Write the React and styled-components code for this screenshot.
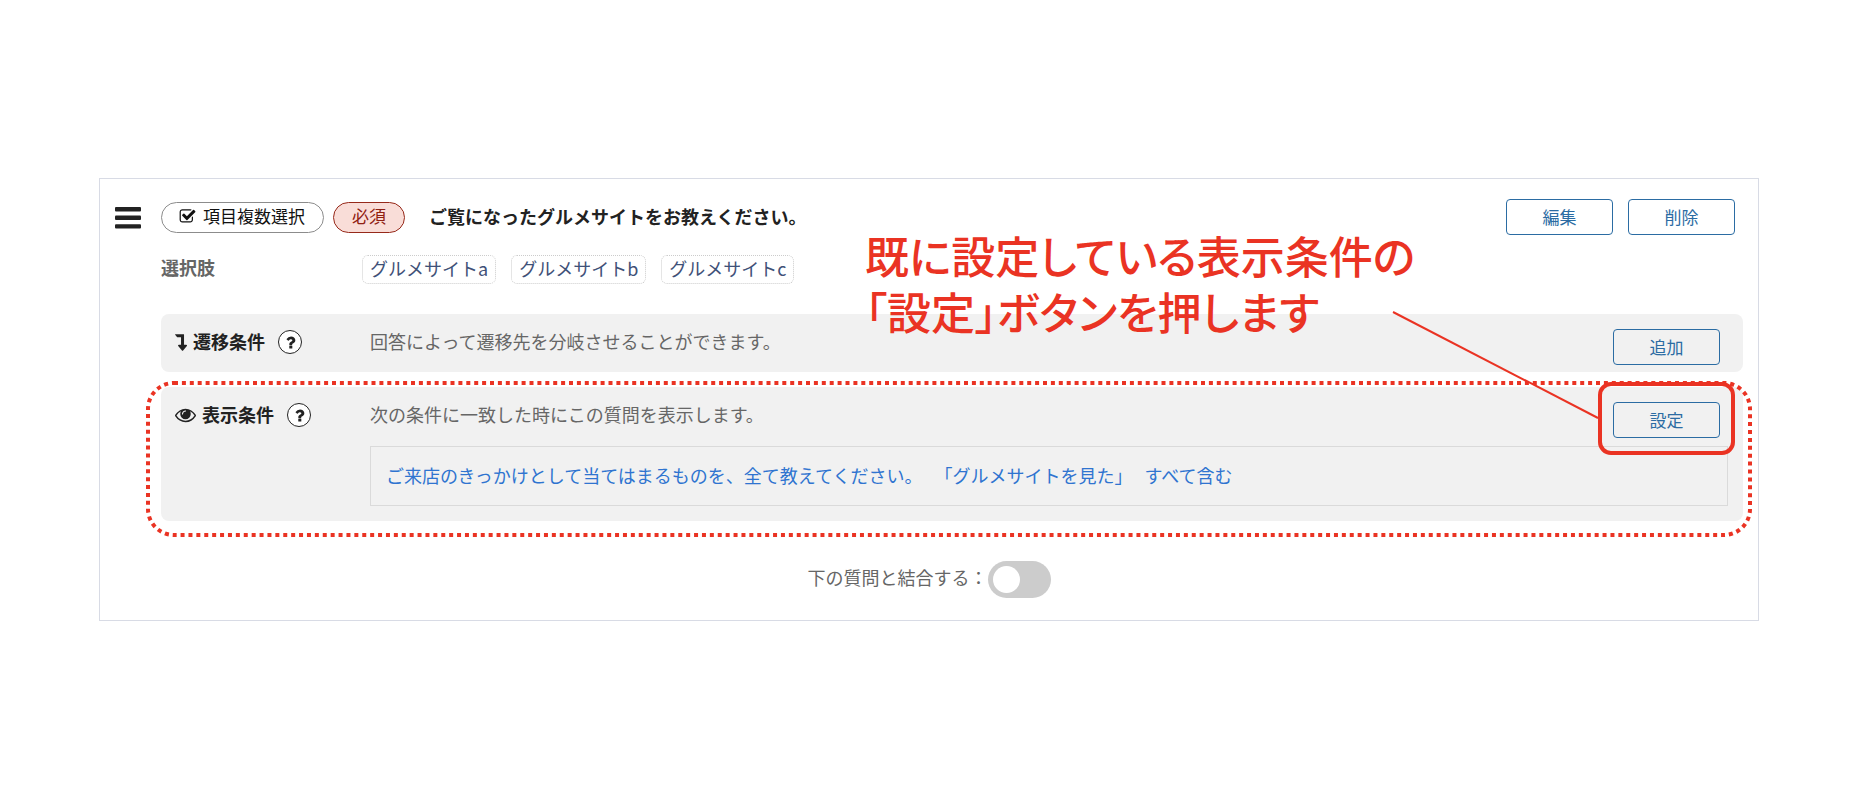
import styled, { createGlobalStyle } from "styled-components";

const GlobalStyle = createGlobalStyle`
  * {
    box-sizing: border-box;
  }
  body {
    margin: 0;
    background-color: #ffffff;
    color: #222222;
    font-family: "Noto Sans CJK JP", sans-serif;
    font-size: 18px;
    line-height: 24px;
  }
  button, input {
    font-family: inherit;
    margin: 0;
  }
`;

const Page = styled.main`
  padding: 178px 97px 40px 99px;
`;
const Card = styled.section`
  position: relative;
  display: flex;
  align-items: flex-start;
  padding: 20px 15px 22px;
  border: 1px solid #d8dbe5;
`;
const Handle = styled.button`
  display: flex;
  align-items: center;
  width: 46px;
  height: 38px;
  flex-shrink: 0;
  padding: 0;
  border: 0;
  background: none;
  color: #222222;
  cursor: grab;
`;
const Body = styled.div`
  flex: 1;
  min-width: 0;
`;
const Header = styled.header`
  display: flex;
  align-items: center;
  height: 36px;
`;
const Pill = styled.span`
  display: flex;
  align-items: center;
  gap: 7px;
  height: 31px;
  margin-right: 9px;
  padding: 0 18px 2px 17px;
  border: 1px solid #8c8c8c;
  border-radius: 16px;
  color: #111111;
  font-size: 17px;
  white-space: nowrap;
  &.required {
    padding: 0 18px 2px;
    border-color: #96291a;
    background-color: #f9ddd8;
    color: #8f2012;
  }
`;
const Title = styled.h2`
  margin: 0 0 0 15px;
  padding-bottom: 2px;
  font-size: 18px;
  font-weight: 700;
`;
const Actions = styled.div`
  display: flex;
  gap: 15px;
  margin-left: auto;
  margin-right: 8px;
`;
const OutlineButton = styled.button`
  width: 107px;
  height: 36px;
  padding: 0;
  border: 1px solid #2b6ca3;
  border-radius: 4px;
  background-color: ${(props) => (props.$plain ? "transparent" : "#ffffff")};
  color: #2b6ca3;
  font-size: 17px;
  line-height: 24px;
  cursor: pointer;
`;
const Choices = styled.div`
  display: flex;
  margin: 20px 0 30px;
`;
const ChoicesLabel = styled.div`
  width: 201px;
  color: #666666;
  font-weight: 700;
`;
const ChoiceList = styled.ul`
  display: flex;
  gap: 15px;
  margin: 0;
  padding: 0;
  list-style: none;
`;
const Choice = styled.li`
  height: 29px;
  padding: 0 7px;
  border: 1px dotted #cccccc;
  border-radius: 6px;
  color: #3f5178;
`;
const Panel = styled.div`
  position: relative;
  display: grid;
  grid-template-columns: 195px 1fr auto;
  align-items: start;
  row-gap: 8px;
  margin-bottom: 15px;
  padding: 15px 15px ${(props) => (props.$tall ? "15px" : "7px")} 14px;
  border-radius: 8px;
  background-color: #f1f1f1;
`;
const PanelLabel = styled.div`
  display: flex;
  align-items: center;
  height: 26px;
  gap: 6px;
`;
const PanelName = styled.h3`
  margin: 0;
  padding-bottom: 2px;
  font-size: 18px;
  font-weight: 700;
`;
const Help = styled.button`
  display: flex;
  align-items: center;
  justify-content: center;
  width: 24px;
  height: 24px;
  margin-left: 7px;
  padding: 0;
  border: 1px solid #222222;
  border-radius: 50%;
  background-color: #ffffff;
  color: #222222;
`;
const Description = styled.p`
  justify-self: start;
  margin: 0;
  color: #666666;
`;
const PanelAction = styled.div`
  position: relative;
  height: 36px;
  margin-right: 8px;
`;
const Condition = styled.a`
  grid-column: 2 / 4;
  display: flex;
  align-items: center;
  gap: 12px;
  height: 60px;
  padding: 0 15px 2px;
  border: 1px solid #dadada;
  color: #2f74d0;
  text-decoration: none;
`;
const Merge = styled.label`
  display: flex;
  align-items: center;
  width: fit-content;
  margin: 40px auto 0;
  /* centres on the card, not on the body beside the handle */
  padding-right: 46px;
  color: #666666;
`;
const MergeText = styled.span`
  padding-bottom: 6px;
`;
const Toggle = styled.input`
  appearance: none;
  width: 63px;
  height: 37px;
  padding: 5px;
  border-radius: 19px;
  background-color: #cccccc;
  cursor: pointer;
  &::before {
    content: "";
    display: block;
    width: 27px;
    height: 27px;
    border-radius: 50%;
    background-color: #ffffff;
  }
  &:checked {
    background-color: #2b6ca3;
  }
  &:checked::before {
    margin-left: auto;
  }
`;

/* red guide marks drawn over the form */
const Note = styled.p`
  position: absolute;
  top: 48px;
  left: 765px;
  margin: 0;
  color: #ea3323;
  font-size: 44px;
  font-weight: 500;
  line-height: 56px;
  font-feature-settings: "palt";
  white-space: nowrap;
  pointer-events: none;
`;
const DottedFrame = styled.svg`
  position: absolute;
  top: -6px;
  left: -15px;
  width: calc(100% + 24px);
  height: calc(100% + 22px);
  pointer-events: none;
  rect {
    width: calc(100% - 4px);
    height: calc(100% - 4px);
  }
`;
const ButtonFrame = styled.div`
  position: absolute;
  top: -20px;
  right: -15px;
  bottom: -17px;
  left: -15px;
  border: 4px solid #ea3323;
  border-radius: 13px;
  pointer-events: none;
`;
const Pointer = styled.svg`
  position: absolute;
  top: -92px;
  right: 121px;
  pointer-events: none;
`;

const BarsIcon = () => (
  <svg width="26" height="22" viewBox="0 0 26 22" fill="currentColor" aria-hidden="true">
    <rect width="26" height="4.4" rx="1" />
    <rect y="8.6" width="26" height="4.4" rx="1" />
    <rect y="17.2" width="26" height="4.4" rx="1" />
  </svg>
);
const CheckIcon = () => (
  <svg width="17" height="17" viewBox="0 0 1792 1792" fill="currentColor" aria-hidden="true">
    <path d="M1472 930v318q0 119-84.500 203.500t-203.500 84.500h-832q-119 0-203.500-84.500t-84.500-203.500v-832q0-119 84.500-203.500t203.500-84.500h832q63 0 117 25 15 7 18 23 3 17-9 29l-49 49q-10 10-23 10-3 0-9-2-23-6-45-6h-832q-66 0-113 47t-47 113v832q0 66 47 113t113 47h832q66 0 113-47t47-113v-254q0-13 9-22l64-64q10-10 23-10 6 0 12 3 20 8 20 29zm231-489l-814 814q-24 24-57 24t-57-24l-430-430q-24-24-24-57t24-57l110-110q24-24 57-24t57 24l263 263 647-647q24-24 57-24t57 24l110 110q24 24 24 57t-24 57z" />
  </svg>
);
const BranchIcon = () => (
  <svg width="12" height="21" viewBox="384 -64 1024 1792" fill="currentColor" aria-hidden="true">
    <path d="M418 128h704q13 0 22.500 9.500t9.500 23.500v863h192q40 0 58 37 17 37-9 68l-320 384q-18 22-49 22t-49-22l-320-384q-26-31-9-68 18-37 58-37h192v-640h-320q-14 0-25-11l-160-192q-13-14-4-34 9-19 29-19z" />
  </svg>
);
const EyeIcon = () => (
  <svg width="21" height="21" viewBox="0 64 1792 1792" fill="currentColor" aria-hidden="true">
    <path d="M1664 960q-152-236-381-353 61 104 61 225 0 185-131.500 316.500t-316.500 131.500-316.500-131.500-131.500-316.500q0-121 61-225-229 117-381 353 133 205 333.500 326.500t434.500 121.500 434.500-121.500 333.500-326.500zm-720-384q0-20-14-34t-34-14q-125 0-214.500 89.500t-89.500 214.500q0 20 14 34t34 14 34-14 14-34q0-86 61-147t147-61q20 0 34-14t14-34zm848 384q0 34-20 69-140 230-376.500 368.500t-499.500 138.500-499.500-139-376.500-368q-20-35-20-69t20-69q140-229 376.500-368t499.500-139 499.500 139 376.500 368q20 35 20 69z" />
  </svg>
);
const QuestionIcon = () => (
  <svg width="17" height="17" viewBox="0 0 1792 1792" fill="currentColor" aria-hidden="true">
    <path d="M1088 1256v240q0 16-12 28t-28 12h-240q-16 0-28-12t-12-28v-240q0-16 12-28t28-12h240q16 0 28 12t12 28zm316-600q0 54-15.500 101t-35 76.500-55 59.500-57.500 43.500-61 35.500q-41 23-68.500 65t-27.500 67q0 17-12 32.500t-28 15.500h-240q-15 0-25.500-18.500t-10.500-37.500v-45q0-83 65-156.500t143-108.500q59-27 84-56t25-76q0-42-46.500-74t-107.500-32q-65 0-108 29-35 25-107 115-13 16-31 16-12 0-25-8l-164-125q-13-10-15.500-25t5.500-28q160-266 464-266 80 0 161 31t146 83 106 127.500 41 158.500z" />
  </svg>
);

const choices = ["グルメサイトa", "グルメサイトb", "グルメサイトc"];

export default function App() {
  return (
    <Page>
      <GlobalStyle />
      <Card>
        <Handle type="button" aria-label="並べ替え">
          <BarsIcon />
        </Handle>
        <Body>
          <Header>
            <Pill>
              <CheckIcon />
              項目複数選択
            </Pill>
            <Pill className="required">必須</Pill>
            <Title>ご覧になったグルメサイトをお教えください。</Title>
            <Actions>
              <OutlineButton type="button">編集</OutlineButton>
              <OutlineButton type="button">削除</OutlineButton>
            </Actions>
          </Header>
          <Choices>
            <ChoicesLabel>選択肢</ChoicesLabel>
            <ChoiceList>
              {choices.map((choice) => (
                <Choice key={choice}>{choice}</Choice>
              ))}
            </ChoiceList>
          </Choices>
          <Panel>
            <PanelLabel>
              <BranchIcon />
              <PanelName>遷移条件</PanelName>
              <Help type="button" aria-label="遷移条件のヘルプ">
                <QuestionIcon />
              </Help>
            </PanelLabel>
            <Description>回答によって遷移先を分岐させることができます。</Description>
            <PanelAction>
              <OutlineButton type="button" $plain>追加</OutlineButton>
            </PanelAction>
          </Panel>
          <Panel $tall>
            <PanelLabel>
              <EyeIcon />
              <PanelName>表示条件</PanelName>
              <Help type="button" aria-label="表示条件のヘルプ">
                <QuestionIcon />
              </Help>
            </PanelLabel>
            <Description>次の条件に一致した時にこの質問を表示します。</Description>
            <PanelAction>
              <OutlineButton type="button" $plain>設定</OutlineButton>
              <ButtonFrame />
              <Pointer width="208" height="110" viewBox="0 0 208 110" aria-hidden="true">
                <path d="M2 2L207 108" stroke="#ea3323" strokeWidth="2" />
              </Pointer>
            </PanelAction>
            <Condition href="#condition">
              <span>ご来店のきっかけとして当てはまるものを、全て教えてください。</span>
              <span>「グルメサイトを見た」</span>
              <span>すべて含む</span>
            </Condition>
            <DottedFrame aria-hidden="true">
              <rect x="2" y="2" rx="26" fill="none" stroke="#ea3323" strokeWidth="4" strokeDasharray="4 3.9" />
            </DottedFrame>
          </Panel>
          <Merge>
            <MergeText>下の質問と結合する：</MergeText>
            <Toggle type="checkbox" />
          </Merge>
        </Body>
        <Note>
          既に設定している表示条件の
          <br />
          「設定」ボタンを押します
        </Note>
      </Card>
    </Page>
  );
}
